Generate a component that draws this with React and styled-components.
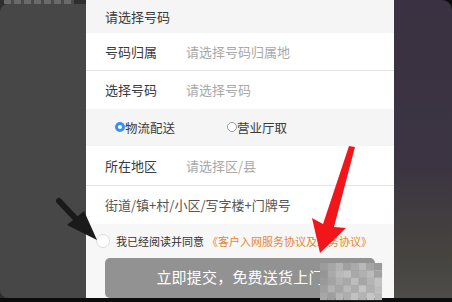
import React from "react";
import styled, { createGlobalStyle } from "styled-components";

const Global = createGlobalStyle`
  html, body { margin: 0; padding: 0; background: #0d0d0d; }
  body { font-family: "Noto Sans CJK SC", "Noto Sans", sans-serif; }
`;

const Page = styled.div`
  position: relative;
  width: 452px;
  height: 302px;
  overflow: hidden;
  background: #0d0d0d;
`;

const Stage = styled.div`
  display: flex;
  height: 298px;
`;

const LeftPanel = styled.div`
  width: 86px;
  display: flex;
  flex-direction: column;
  background: #2e2e2e;
`;

const Smudge = styled.div`
  height: 4px;
  margin: 0 12px 0 4px;
  background: repeating-linear-gradient(90deg, #6a6a6a 0 7px, #4a4a4a 7px 10px);
  filter: blur(0.7px);
`;

const LeftBody = styled.div`
  flex: 1;
  background: #474747;
  border-radius: 8px 0 0 8px;
`;

const Center = styled.div`
  width: 308px;
  display: flex;
  flex-direction: column;
  background: #fff;
  overflow: hidden;
`;

const RightPanel = styled.div`
  width: 58px;
  background: linear-gradient(180deg, #3a3142 0%, #3b3441 55%, #46433f 85%, #4d4c48 100%);
  border-top-right-radius: 10px;
`;

const TopRow = styled.div`
  height: 33px;
  display: flex;
  align-items: center;
  padding-left: 19px;
  background: #f5f5f5;
  color: #3a3a3a;
  font-size: 13px;
`;

const Row = styled.div`
  height: ${(p) => p.$h}px;
  display: flex;
  align-items: center;
  padding-left: 19px;
  background: #fff;
  font-size: 13px;
`;

const Label = styled.span`
  width: 81px;
  color: #3a3a3a;
`;

const Hint = styled.span`
  color: ${(p) => (p.$dark ? "#555" : "#a8a8a8")};
`;

const Divider = styled.div`
  height: 1px;
  background: #e4e4e4;
`;

const RadioRow = styled.div`
  height: 38px;
  display: flex;
  align-items: center;
  padding-left: 29px;
  gap: 52px;
  background: #f5f5f5;
  font-size: 12.5px;
  color: #3a3a3a;
`;

const Option = styled.span`
  display: flex;
  align-items: center;
`;

const Dot = styled.span`
  width: ${(p) => (p.$on ? 4 : 8)}px;
  height: ${(p) => (p.$on ? 4 : 8)}px;
  border-radius: 50%;
  background: #fff;
  border: ${(p) => (p.$on ? "3px solid #3b8ff0" : "1px solid #999")};
`;

const Footer = styled.div`
  flex: 1;
  display: flex;
  flex-direction: column;
  background: #f7f7f7;
`;

const Agree = styled.div`
  height: 34px;
  display: flex;
  align-items: center;
  padding-left: 10px;
  font-size: 11px;
  color: #333;
`;

const Check = styled.span`
  width: 12px;
  height: 12px;
  border-radius: 50%;
  border: 1px solid #dcdcdc;
  background: #fff;
  margin-right: 6px;
`;

const Link = styled.span`
  color: #e8862f;
  margin-left: 3px;
`;

const Button = styled.div`
  margin-left: 19px;
  width: 270px;
  height: 40px;
  border-radius: 5px;
  background: #929292;
  color: #fff;
  font-size: 15px;
  display: flex;
  align-items: flex-start;
  justify-content: center;
  padding-top: 8px;
  box-sizing: border-box;
  letter-spacing: 0.2px;
`;

const Overlay = styled.svg`
  position: absolute;
  left: 0;
  top: 0;
  pointer-events: none;
`;

const mosaic = [
  ["#9c9c9c", "#a6a6a6", "#b3b3b3", "#a0a0a0", "#aaaaaa", "#b8b8b8", "#a4a4a4", "#9a9a9a"],
  ["#959595", "#a9a9a9", "#b9b9b9", "#c0c0c0", "#a8a8a8", "#b0b0b0", "#bcbcbc", "#a2a2a2"],
  ["#9a9a9a", "#a3a3a3", "#b0b0b0", "#a9a9a9", "#bdbdbd", "#a5a5a5", "#b4b4b4", "#c2c2c2"],
  ["#a0a0a0", "#b2b2b2", "#a6a6a6", "#b9b9b9", "#acacac", "#c4c4c4", "#b0b0b0", "#bdbdbd"],
  ["#a7a7a7", "#9e9e9e", "#b6b6b6", "#aeaeae", "#c1c1c1", "#b3b3b3", "#c6c6c6", "#b8b8b8"],
];

export default function App() {
  return (
    <Page>
      <Global />
      <Stage>
        <LeftPanel>
          <Smudge />
          <LeftBody />
        </LeftPanel>
        <Center>
          <TopRow>请选择号码</TopRow>
          <Row $h={38}>
            <Label>号码归属</Label>
            <Hint>请选择号码归属地</Hint>
          </Row>
          <Divider />
          <Row $h={38}>
            <Label>选择号码</Label>
            <Hint>请选择号码</Hint>
          </Row>
          <RadioRow>
            <Option><Dot $on />物流配送</Option>
            <Option><Dot />营业厅取</Option>
          </RadioRow>
          <Row $h={39}>
            <Label>所在地区</Label>
            <Hint>请选择区/县</Hint>
          </Row>
          <Divider />
          <Row $h={39}>
            <Hint $dark>街道/镇+村/小区/写字楼+门牌号</Hint>
          </Row>
          <Footer>
            <Agree>
              <Check />
              我已经阅读并同意<Link>《客户入网服务协议及业务协议》</Link>
            </Agree>
            <Button>立即提交，免费送货上门</Button>
          </Footer>
        </Center>
        <RightPanel />
      </Stage>
      <Overlay width="452" height="302" viewBox="0 0 452 302">
        {mosaic.map((row, r) =>
          row.map((c, i) => (
            <rect key={`${r}-${i}`} x={320 + i * 7.75} y={263 + r * 7.4} width="7.8" height="7.5" fill={c} />
          ))
        )}
        <line x1="59" y1="201" x2="76" y2="219" stroke="#1a1a1a" strokeWidth="6" strokeLinecap="round" />
        <polygon points="67,225 84,211 97,240" fill="#1a1a1a" />
        <polygon points="349,146 355,147 334,227 346,228 320,253 312,218 323,224" fill="#f2161b" />
      </Overlay>
    </Page>
  );
}
